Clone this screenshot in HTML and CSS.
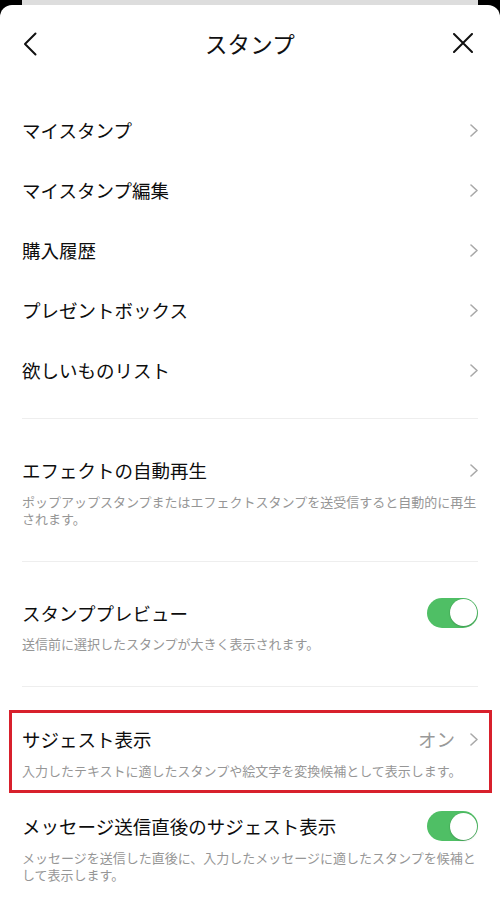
FILE: index.html
```html
<!DOCTYPE html>
<html lang="ja">
<head>
<meta charset="utf-8">
<title>スタンプ</title>
<link rel="stylesheet" href="styles.css">
</head>
<body>
<div class="backsheet"></div>
<div class="sheet">
  <header class="header">
    <span class="icon back">
      <svg width="14" height="24" viewBox="0 0 14 24"><path d="M12.5 1.5 L2 12 L12.5 22.5" fill="none" stroke="#111" stroke-width="2" stroke-linecap="round" stroke-linejoin="round"/></svg>
    </span>
    <h1 class="title">スタンプ</h1>
    <span class="icon close">
      <svg width="20" height="20" viewBox="0 0 20 20"><path d="M1 1 L19 19 M19 1 L1 19" fill="none" stroke="#111" stroke-width="2" stroke-linecap="round"/></svg>
    </span>
  </header>

  <ul class="menu">
    <li class="row"><span class="label">マイスタンプ</span><svg class="chev" width="8" height="13" viewBox="0 0 8 13"><path d="M1 1 L7 6.5 L1 12" fill="none" stroke="#a9a9a9" stroke-width="1.6" stroke-linecap="round" stroke-linejoin="round"/></svg></li>
    <li class="row"><span class="label">マイスタンプ編集</span><svg class="chev" width="8" height="13" viewBox="0 0 8 13"><path d="M1 1 L7 6.5 L1 12" fill="none" stroke="#a9a9a9" stroke-width="1.6" stroke-linecap="round" stroke-linejoin="round"/></svg></li>
    <li class="row"><span class="label">購入履歴</span><svg class="chev" width="8" height="13" viewBox="0 0 8 13"><path d="M1 1 L7 6.5 L1 12" fill="none" stroke="#a9a9a9" stroke-width="1.6" stroke-linecap="round" stroke-linejoin="round"/></svg></li>
    <li class="row"><span class="label">プレゼントボックス</span><svg class="chev" width="8" height="13" viewBox="0 0 8 13"><path d="M1 1 L7 6.5 L1 12" fill="none" stroke="#a9a9a9" stroke-width="1.6" stroke-linecap="round" stroke-linejoin="round"/></svg></li>
    <li class="row"><span class="label">欲しいものリスト</span><svg class="chev" width="8" height="13" viewBox="0 0 8 13"><path d="M1 1 L7 6.5 L1 12" fill="none" stroke="#a9a9a9" stroke-width="1.6" stroke-linecap="round" stroke-linejoin="round"/></svg></li>
  </ul>

  <div class="divider first"></div>

  <section class="group">
    <div class="setting">
      <div class="setting-head">
        <span class="label">エフェクトの自動再生</span>
        <svg class="chev" width="8" height="13" viewBox="0 0 8 13"><path d="M1 1 L7 6.5 L1 12" fill="none" stroke="#a9a9a9" stroke-width="1.6" stroke-linecap="round" stroke-linejoin="round"/></svg>
      </div>
      <p class="desc">ポップアップスタンプまたはエフェクトスタンプを送受信すると自動的に再生されます。</p>
    </div>
  </section>

  <div class="divider"></div>

  <section class="group">
    <div class="setting">
      <div class="setting-head">
        <span class="label">スタンププレビュー</span>
        <span class="toggle"></span>
      </div>
      <p class="desc">送信前に選択したスタンプが大きく表示されます。</p>
    </div>
  </section>

  <div class="divider"></div>

  <section class="group last">
    <div class="highlight">
      <div class="setting boxed">
        <div class="setting-head">
          <span class="label">サジェスト表示</span>
          <span class="value-wrap">
            <span class="value">オン</span>
            <svg class="chev" width="8" height="13" viewBox="0 0 8 13"><path d="M1 1 L7 6.5 L1 12" fill="none" stroke="#a9a9a9" stroke-width="1.6" stroke-linecap="round" stroke-linejoin="round"/></svg>
          </span>
        </div>
        <p class="desc">入力したテキストに適したスタンプや絵文字を変換候補として表示します。</p>
      </div>
    </div>
    <div class="setting after-box">
      <div class="setting-head">
        <span class="label">メッセージ送信直後のサジェスト表示</span>
        <span class="toggle"></span>
      </div>
      <p class="desc">メッセージを送信した直後に、入力したメッセージに適したスタンプを候補として表示します。</p>
    </div>
  </section>
</div>
</body>
</html>
```

FILE: styles.css
```css
* {
  box-sizing: border-box;
}

html, body {
  margin: 0;
  padding: 0;
}

body {
  background: #000;
  font-family: "Noto Sans CJK JP", "Noto Sans", sans-serif;
  color: #111;
  width: 500px;
  height: 907px;
  overflow: hidden;
}

.backsheet {
  height: 5px;
  margin: 0 22px;
  background: #dddddd;
}

.sheet {
  background: #fff;
  border-radius: 12px 12px 0 0;
  height: 902px;
  overflow: hidden;
}

.header {
  height: 76px;
  display: grid;
  grid-template-columns: 1fr auto 1fr;
  align-items: center;
  padding: 0 22px;
}

.icon {
  display: flex;
  align-items: center;
}

.back {
  justify-self: start;
  padding-left: 1px;
  margin-top: 1px;
}

.close {
  justify-self: end;
  margin-right: 5px;
}

.title {
  margin: 0;
  font-size: 22.5px;
  font-weight: 400;
  line-height: 30px;
  letter-spacing: 0.2px;
}

.menu {
  list-style: none;
  margin: 0;
  padding: 19px 0 0;
}

.row {
  height: 60px;
  display: flex;
  align-items: center;
  justify-content: space-between;
  padding: 0 22px;
}

.label {
  font-size: 18.5px;
  line-height: 30px;
  color: #0d0d0d;
}

.chev {
  display: block;
  flex: none;
}

.divider {
  height: 1px;
  background: #eeeeee;
  margin: 0 22px;
}

.divider.first {
  margin-top: 18px;
}

.group {
  padding: 36px 0 34px;
}

.group.last {
  padding: 23px 0 0;
}

.setting {
  padding: 0 22px;
}

.setting-head {
  height: 30px;
  display: flex;
  align-items: center;
  justify-content: space-between;
}

.desc {
  margin: 7.5px 0 0;
  font-size: 13px;
  line-height: 17px;
  color: #969696;
}

.toggle {
  position: relative;
  flex: none;
  width: 51px;
  height: 30px;
  border-radius: 15px;
  background: #4fbf65;
}

.toggle::after {
  content: "";
  position: absolute;
  top: 1.5px;
  right: 1.5px;
  width: 27px;
  height: 27px;
  border-radius: 50%;
  background: #fff;
  box-shadow: 0 0 0 0.5px rgba(0, 0, 0, 0.08), 0 1px 2px rgba(0, 0, 0, 0.15);
}

.highlight {
  margin: 0 8px 0 9px;
  border: 3px solid #d8202c;
  padding: 11px 11px 11.5px 10px;
}

.setting.boxed {
  padding: 0;
}

.value-wrap {
  display: flex;
  align-items: center;
  gap: 15px;
}

.value {
  font-size: 18.5px;
  line-height: 30px;
  color: #999;
}

.setting.after-box {
  margin-top: 18px;
}
```
